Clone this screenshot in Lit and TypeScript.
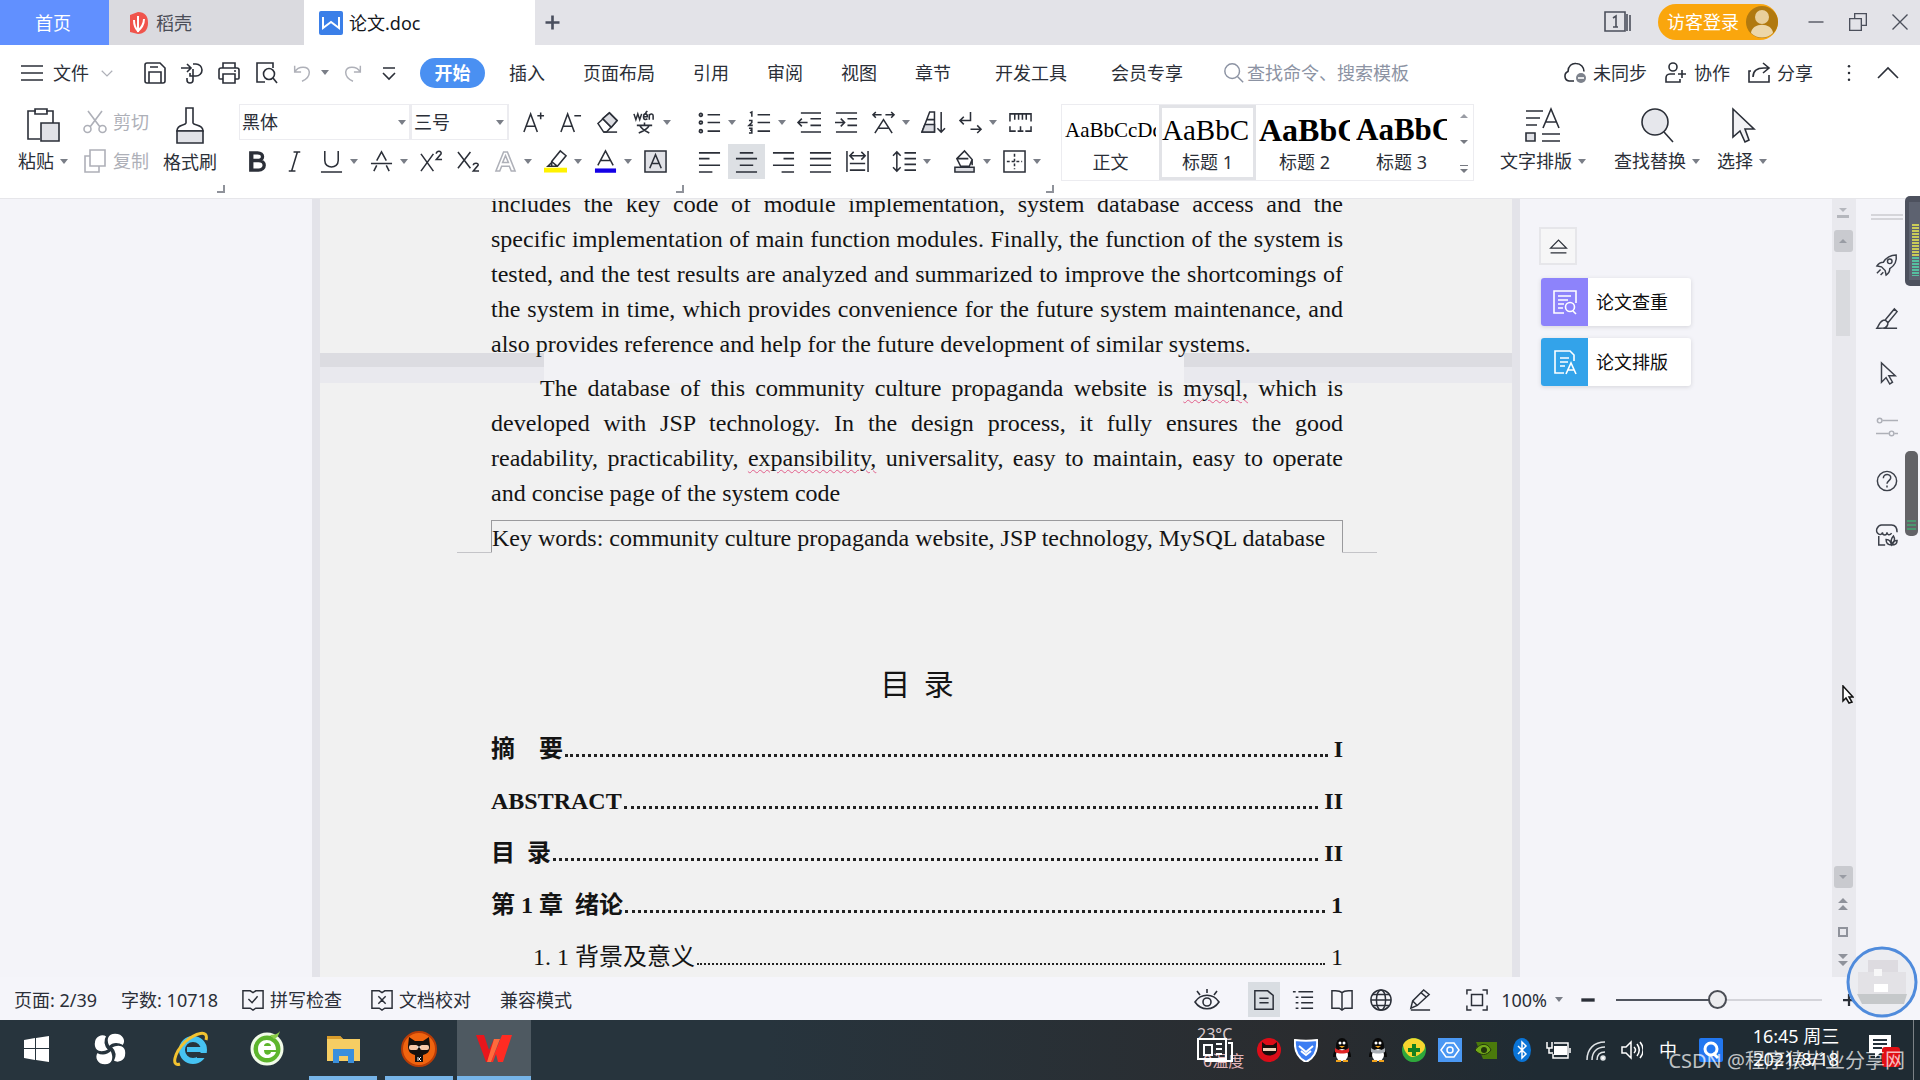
import { LitElement, html, svg, css, nothing, TemplateResult, SVGTemplateResult } from "lit";
import { customElement, state } from "lit/decorators.js";
import { classMap } from "lit/directives/class-map.js";

const GLYPHS: Record<string, SVGTemplateResult> = {
  burger: svg`<path d="M1 5h22M1 12h22M1 19h22"/>`,
  chevron: svg`<path d="M5 9l7 7 7-7"/>`,
  chevronUp: svg`<path d="M2 17L12 7l10 10"/>`,
  save: svg`<path d="M4 2h13l5 5v13a2 2 0 0 1-2 2H4a2 2 0 0 1-2-2V4a2 2 0 0 1 2-2zM6 22V11h12v11M7 6h8"/>`,
  convert: svg`<path d="M1 7h9M7 3l4 4-4 4M13 3h3a6 6 0 0 1 0 12h-6v-3M13 8v11a3 3 0 0 1-6 0v-2"/>`,
  print: svg`<path d="M6 7V2h12v5M6 18H3a1 1 0 0 1-1-1V9a2 2 0 0 1 2-2h16a2 2 0 0 1 2 2v8a1 1 0 0 1-1 1h-3M6 13h12v9H6zM17 10h2"/>`,
  preview: svg`<path d="M11 21H3V2h16v5"/><circle cx="15" cy="13" r="5.5"/><path d="M19 17l4 5"/>`,
  undo: svg`<path d="M4 4v7h7M4 11c4-7 15-7 16 0 0 5-3 8-8 10"/>`,
  redo: svg`<path d="M20 4v7h-7M20 11C16 4 5 4 4 11c0 5 3 8 8 10"/>`,
  overflow: svg`<path d="M6 7h12M6 12l6 6 6-6"/>`,
  search: svg`<circle cx="10" cy="10" r="8"/><path d="M16 16l6 6"/>`,
  cloud: svg`<path d="M11 20H6a5 5 0 0 1-1-9.500C5 5 9 2 13 2.500c5 0 8 4 8 8"/><circle cx="18" cy="17" r="5" fill="#7d828c" stroke="none"/><path d="M15 17h6" stroke="#fff"/>`,
  person: svg`<circle cx="9" cy="6" r="4"/><path d="M11 13H6c-3 0-4 2-4 4v4h14v-3M14 13h8M18 9v8"/>`,
  share: svg`<path d="M4 10H2v11h20v-7M6 16c0-6 4-9 11-9h4M16 2l6 5-6 5"/>`,
  dots: svg`<g fill="currentColor" stroke="none"><circle cx="12" cy="4" r="1.500"/><circle cx="12" cy="12" r="1.500"/><circle cx="12" cy="20" r="1.500"/></g>`,
  plus: svg`<path d="M12 4v16M4 12h16" stroke-width="3"/>`,
  minus: svg`<path d="M4 12h16" stroke-width="4"/>`,
  windows: svg`<path d="M1 2h20v19H1zM23 4v17M26 5v16"/><path d="M9 8l3-2v11M9 17h5"/>`,
  min: svg`<path d="M3 12h18"/>`,
  restore: svg`<path d="M2 8h14v14H2zM8 8V2h14v14h-6"/>`,
  close: svg`<path d="M3 3l18 18M21 3L3 21"/>`,
  cut: svg`<path d="M5 1l12 16M19 1L7 17"/><circle cx="4.500" cy="19" r="3.500"/><circle cx="19.500" cy="19" r="3.500"/>`,
  copy: svg`<path d="M7 1h15v16H7zM7 7H2v16h14v-6"/>`,
  incA: svg`<path d="M2 22L9 3l7 19M4 16h10M16 5h7M19.500 1.500v7"/>`,
  decA: svg`<path d="M2 22L9 3l7 19M4 16h10M16 5h7"/>`,
  eraser: svg`<path d="M2 13L14 2l8 8-11 12H8zM7 8l9 9" /><path d="M14 2l8 8-6 7-9-9z" fill="#dcdde2"/><path d="M8 22h14"/>`,
  pinyin: svg`<path d="M1 3l2 6 2-6 2 6 2-6M11 6h4c0-4-4-4-4 0s3 3 4 2M13 2l2-2M17 9V3M17 5c1-3 4-2 4 0v4M12 12v3M4 15h16M7 15c2 4 6 6 10 8M17 15c-2 4-6 6-11 8"/>`,
  bold: svg`<path d="M5 3h7c7 0 7 8 0 8H6h7c8 0 8 10 0 10H5zM6 3v18" stroke-width="3.500"/>`,
  italic: svg`<path d="M11 2h7M6 22h7M15 2L9 22"/>`,
  underline: svg`<path d="M5 1v10c0 9 14 9 14 0V1M1 23h22"/>`,
  strike: svg`<path d="M7 11l5-9 5 9M1 14h22M4 22l3-6M17 16l3 6"/>`,
  sup: svg`<path d="M1 4l13 18M14 4L1 22M17 4c0-4 6-3 5 0l-5 6h6"/>`,
  sub: svg`<path d="M1 2l13 17M14 2L1 19M17 16c0-3 6-3 5 0l-5 6h6"/>`,
  outlineA: svg`<path d="M2 22L10 2h4l8 20h-4l-2-5H8l-2 5zM9 13h6l-3-7z"/>`,
  marker: svg`<path d="M8 12L17 1l6 5-9 11H8zM8 12l6 5M8 13l-4 4h5"/><path d="M0 21h24" stroke="#fff200" stroke-width="5"/>`,
  colorA: svg`<path d="M4 16L12 1l8 15M7 11h10"/><path d="M1 21.500h22" stroke="#1400e6" stroke-width="4.500"/>`,
  boxA: svg`<path d="M1 1h22v22H1z" fill="#e1e2e7"/><path d="M6 19l6-14 6 14M8 14h8"/>`,
  bullets: svg`<path d="M10 4h13M10 12h13M10 21h13"/><g stroke-width="1.800"><circle cx="3" cy="4" r="1.500"/><circle cx="3" cy="12" r="1.500"/><circle cx="3" cy="21" r="1.500"/></g>`,
  numbers: svg`<path d="M10 4h13M10 12h13M10 21h13"/><path d="M2 2l2-1v5M1 10h3v2l-3 3h4M1 18h3v5H1M2 20h2" />`,
  outdent: svg`<path d="M3 2h21M13 8h11M13 15h11M3 22h21M0 12h10M4 8l-4 4 4 4"/>`,
  indent: svg`<path d="M1 2h22M13 8h10M13 15h10M1 22h22M0 12h9M6 8l4 4-4 4"/>`,
  scaleA: svg`<path d="M1 4h9M4 1L1 4l3 3M14 4h9M20 1l3 3-3 3M3 23L12 9l9 14M7 18h10"/>`,
  sort: svg`<path d="M0 22L8 1h5v21zM5 9h8" /><path d="M0 22l3-8h10v8z" fill="#d9dae0"/><path d="M20 1v21M16 18l4 4 4-4"/>`,
  wrap: svg`<path d="M12 1v9H1M5 6l-4 4 4 4M12 19h11M19 15l4 4-4 4"/>`,
  ruler: svg`<path d="M1 11V3h22v8M6 3v6M10 3v6M14 3v6M18 3v6M1 16v5h6M23 16v5h-6M12 16v5M9 21h6"/>`,
  left: svg`<path d="M1 3h22M1 9h11M1 16h22M1 23h14" />`,
  center: svg`<path d="M5 3h14M1 9h22M5 16h14M1 23h22"/>`,
  right: svg`<path d="M1 3h22M12 9h11M1 16h22M10 23h13"/>`,
  justify: svg`<path d="M1 3h22M1 9h22M1 16h22M1 23h22"/>`,
  distribute: svg`<path d="M1 1v22M23 1v22M4 14h16M4 21h16M5 6h14M8 2L4 6l4 4M16 2l4 4-4 4"/>`,
  spacing: svg`<path d="M4 2v20M0 6l4-4 4 4M0 18l4 4 4-4M12 3h12M12 9h12M12 15h12M12 21h12"/>`,
  shading: svg`<path d="M4 9L12 1l8 9-3 7H8zM4 9h12M20 10v6"/><path d="M2 18h20v5H2z" fill="#dcdde2"/>`,
  borders: svg`<path d="M1 1h22v22H1z"/><path d="M12 4v16M4 12h16" stroke-dasharray="3 2"/>`,
  rocket: svg`<path d="M22 1c-7 0-11 3-14 8-3 0-5 1-7 4l5 1 4 4 1 5c3-2 4-4 4-7 5-3 8-8 7-15z"/><circle cx="15" cy="8" r="2.500"/><path d="M5 17l-4 4M8 20l-3 3"/>`,
  brush: svg`<path d="M10 13L20 1l3 3-10 12M10 13c-6 0-6 5-9 9 6 0 12 1 12-6zM8 22h15"/>`,
  pointer: svg`<path d="M6 1v21l5-5 4 7 3-2-4-7h7z"/>`,
  sliders: svg`<circle cx="4" cy="5" r="2.500"/><path d="M7 5h17M0 19h14M20 19h4"/><circle cx="17" cy="19" r="2.500"/>`,
  help: svg`<circle cx="12" cy="12" r="10.500"/><path d="M8 9c0-6 9-5 8 0-1 3-4 3-4 6M12 17v2"/>`,
  store: svg`<path d="M3 13v10h7M3 11C1 10 0 8 1 5c1-2 2-4 5-4h11c4 0 6 3 6 8M7 9c0 4 5 4 5 0M12 9c0 3 3 4 5 1M3 11c2 1 4 0 4-2"/><path d="M17 23c-4 0-6-2-6-6 4 0 5 2 6 6zM17 23c-1-4 0-8 2-10 2 3 1 7-2 10zM17 23c1-4 3-5 6-5 0 4-2 5-6 5z"/>`,
  eject: svg`<path d="M2 14L12 4l10 10zM2 20h20"/>`,
  spell: svg`<path d="M1 2h8l3 2 3-2h8v19h-8l-3 2-3-2H1zM7 11l4 4 6-7"/>`,
  proof: svg`<path d="M1 2h8l3 2 3-2h8v19h-8l-3 2-3-2H1zM8 8l8 8M16 8l-8 8"/>`,
  eye: svg`<path d="M0 14c6-9 18-9 24 0-6 9-18 9-24 0z"/><circle cx="12" cy="14" r="4"/><path d="M12 1v4M2 3l3 4M22 3l-3 4"/>`,
  page: svg`<path d="M2 2h14l6 5v15H2zM7 10h10M7 15h10"/>`,
  outline: svg`<path d="M1 3h3M7 3h16M4 9h3M10 9h13M4 15h3M10 15h13M4 21h3M10 21h13"/>`,
  book: svg`<path d="M12 4c-3-3-7-2-11-2v19h8l3 2 3-2h8V2c-4 0-8-1-11 2v19"/>`,
  globe: svg`<circle cx="12" cy="12" r="11"/><ellipse cx="12" cy="12" rx="5" ry="11"/><path d="M1 12h22M3 6h18M3 18h18"/>`,
  pen: svg`<path d="M2 21l2-8L16 1l6 5L9 18zM13 4l6 5M4 13l5 5M2 23h21"/>`,
  fit: svg`<path d="M1 6V1h5M18 1h5v5M23 18v5h-5M6 23H1v-5M6 6h12v12H6z"/>`,
};

const icon = (name: string, size = 24) => html`
  <svg class="glyph" width=${size} height=${size} viewBox="0 0 24 24" aria-hidden="true">${GLYPHS[name]}</svg>`;

const caret = html`<svg class="caret" width="8" height="5" viewBox="0 0 8 5" aria-hidden="true"><path d="M0 0h8L4 5z"/></svg>`;

interface Tool { id: string; label: string; drop?: boolean; off?: boolean; gap?: boolean }

const FONT_TOP: Tool[] = [
  { id: "incA", label: "增大字号" }, { id: "decA", label: "减小字号" },
  { id: "eraser", label: "清除格式" }, { id: "pinyin", label: "拼音指南", drop: true },
];
const FONT_BOTTOM: Tool[] = [
  { id: "bold", label: "加粗" }, { id: "italic", label: "倾斜" }, { id: "underline", label: "下划线", drop: true },
  { id: "strike", label: "删除线", drop: true }, { id: "sup", label: "上标" }, { id: "sub", label: "下标" },
  { id: "outlineA", label: "文字效果", drop: true, off: true }, { id: "marker", label: "突出显示", drop: true },
  { id: "colorA", label: "字体颜色", drop: true }, { id: "boxA", label: "字符底纹" },
];
const PARA_TOP: Tool[] = [
  { id: "bullets", label: "项目符号", drop: true }, { id: "numbers", label: "编号", drop: true },
  { id: "outdent", label: "减少缩进量" }, { id: "indent", label: "增加缩进量" },
  { id: "scaleA", label: "中文版式", drop: true }, { id: "sort", label: "排序" },
  { id: "wrap", label: "显示编辑标记", drop: true }, { id: "ruler", label: "制表位" },
];
const PARA_BOTTOM: Tool[] = [
  { id: "left", label: "左对齐" }, { id: "center", label: "居中对齐" }, { id: "right", label: "右对齐" },
  { id: "justify", label: "两端对齐" }, { id: "distribute", label: "分散对齐" },
  { id: "spacing", label: "行距", drop: true, gap: true }, { id: "shading", label: "底纹颜色", drop: true, gap: true },
  { id: "borders", label: "边框", drop: true },
];

const MENUS = ["开始", "插入", "页面布局", "引用", "审阅", "视图", "章节", "开发工具", "会员专享"];

const STYLES = [
  { sample: "AaBbCcDd", name: "正文", kind: "body" },
  { sample: "AaBbC", name: "标题 1", kind: "h1" },
  { sample: "AaBbC", name: "标题 2", kind: "h2" },
  { sample: "AaBbC", name: "标题 3", kind: "h3" },
];

const PARA_ONE = [
  "includes the key code of module implementation, system database access and the",
  "specific implementation of main function modules. Finally, the function of the system is",
  "tested, and the test results are analyzed and summarized to improve the shortcomings of",
  "the system in time, which provides convenience for the future system maintenance, and",
  "also provides reference and help for the future development of similar systems.",
];
const PARA_TWO: (string | TemplateResult)[] = [
  html`The database of this community culture propaganda website is <span class="typo">mysql,</span> which is`,
  "developed with JSP technology. In the design process, it fully ensures the good",
  html`readability, practicability, <span class="typo">expansibility,</span> universality, easy to maintain, easy to operate`,
  "and concise page of the system code",
];

const TOC = [
  { title: "摘\u3000要", page: "I", level: 1 },
  { title: "ABSTRACT", page: "II", level: 1 },
  { title: "目  录", page: "II", level: 1 },
  { title: "第 1 章  绪论", page: "1", level: 1 },
  { title: "1. 1 背景及意义", page: "1", level: 2 },
];

@customElement("app-root")
export class AppRoot extends LitElement {
  @state() private menu = "开始";
  @state() private align = "center";

  static styles = css`
    :host { display: flex; flex-direction: column; height: 100vh; overflow: hidden; position: relative;
      font: 18px/24px "Noto Sans", "Noto Sans CJK SC", sans-serif; color: #2b2f38; background: #f4f4f9; }
    * { box-sizing: border-box; }
    button, select, input { font: inherit; color: inherit; background: none; border: 0; padding: 0; margin: 0; outline: none; }
    button { white-space: nowrap; }
    a { color: inherit; text-decoration: none; }
    .glyph { flex: none; display: block; fill: none; stroke: currentColor; stroke-width: 1.6; overflow: visible; }
    .caret { flex: none; fill: #7a7e87; }
    .art { flex: none; display: block; }
    .row { display: flex; align-items: center; }
    .push { margin-left: auto; }
    .muted { color: #aeb0b8; }

    .titlebar { display: flex; height: 45px; background: #e3e3e8; flex: none; }
    .tab { display: flex; align-items: center; height: 45px; }
    .tab-home { width: 109px; background: #6190ff; color: #fff; justify-content: center; padding-right: 3px; }
    .tab-docer { width: 195px; background: #dadadf; padding-left: 20px; gap: 7px; color: #4a4d57; }
    .tab-doc { width: 231px; background: #fff; padding-left: 15px; gap: 6px; color: #15171c; }
    .tab-new { width: 34px; justify-content: center; color: #4a4f5e; }
    .window { padding-right: 10px; gap: 22px; color: #4b4f5b; padding-bottom: 2px; }
    .login { display: flex; align-items: center; width: 120px; height: 36px; border-radius: 18px; background: #faa60d;
      color: #fff; padding-left: 9px; gap: 7px; margin: 0 6px 0 8px; }

    .menubar { display: flex; align-items: center; height: 55px; background: #fff; padding: 0 20px; flex: none; }
    .file { display: flex; align-items: center; gap: 9px; margin-right: 27px; }
    .quick { display: flex; align-items: center; gap: 13px; }
    .quick .tight { display: flex; align-items: center; gap: 8px; }
    .menus { display: flex; align-items: center; gap: 38px; margin-left: 19px; }
    .menus button.on { background: #4a90f2; color: #fff; font-weight: 700; border-radius: 15px; height: 30px; width: 65px; margin-right: -14px; }
    .menus .wide { margin-left: 6px; }
    .find { display: flex; align-items: center; gap: 2px; margin-left: 40px; color: #8c93a3; }
    .find input { width: 180px; }
    .find input::placeholder { color: #8c93a3; opacity: 1; }
    .account { gap: 17px; }
    .account button { display: flex; align-items: center; gap: 6px; }
    .account .more { margin-left: 9px; }

    .ribbon { display: flex; height: 99px; background: #fff; padding: 4px 18px 0; flex: none; border-bottom: 1px solid #e6e6ea; }
    .big { display: flex; flex-direction: column; align-items: center; gap: 6px; padding-top: 3px; height: 78px; }
    .big .row { gap: 6px; }
    .clip { display: flex; flex-direction: column; gap: 15px; margin: 6px 14px 0 15px; }
    .clip button { display: flex; align-items: center; gap: 6px; }
    .corner { width: 8px; height: 8px; border: solid #8f929a; border-width: 0 2px 2px 0; align-self: flex-end; margin-bottom: 5px; flex: none; }
    .group { display: flex; flex-direction: column; gap: 3px; }
    .group.font { margin-left: 14px; }
    .group.para { margin-left: 7px; }
    .tools { display: flex; align-items: center; height: 36px; }
    .tool { display: flex; align-items: center; height: 36px; }
    .tool.gap { margin-left: 10px; }
    .pad { width: 37px; height: 35px; display: flex; align-items: center; justify-content: center; }
    .tool.on .pad { background: #dde0e4; }
    .tool .caret { margin-right: 5px; }
    .combo { position: relative; display: flex; align-items: center; height: 36px; border: 1px solid #ececf0; border-right-width: 2px; }
    .combo select { appearance: none; width: 100%; height: 34px; padding-left: 2px; }
    .combo .caret { position: absolute; right: 3px; }
    .combo.face { width: 172px; }
    .combo.size { width: 98px; margin-right: 6px; }

    .styles { display: flex; height: 77px; border: 1px solid #ececf0; margin-left: 7px; }
    .style { display: flex; flex-direction: column; width: 97px; height: 75px; padding: 5px 3px 0; overflow: hidden; align-items: stretch; }
    .style.h1 { box-shadow: inset 0 0 0 3px #e2e3e7; }
    .sample { font-family: "Liberation Serif", serif; color: #000; line-height: 40px; height: 40px; overflow: hidden; text-align: left; }
    .body .sample { font-size: 21px; }
    .h1 .sample { font-size: 29px; }
    .h2 .sample { font-size: 32px; font-weight: 700; }
    .h3 .sample { font-size: 31px; font-weight: 700; }
    .scroll { display: flex; flex-direction: column; justify-content: space-between; padding: 9px 5px 7px 10px; }
    .scroll svg { display: block; }
    .edit { display: flex; margin-left: 26px; gap: 28px; }
    .edit .near { margin-left: -11px; }

    .workspace { display: flex; flex: 1; min-height: 0; }
    .canvas { flex: 1; position: relative; display: flex; justify-content: center; overflow: hidden; }
    .sheet { width: 1208px; flex: none; background: #f1f1f1; border: solid #e3e3e9; border-width: 0 8px; isolation: isolate;
      padding: 0 169px 0 171px; color: #141414; font: 24px/35px "Liberation Serif", "Noto Sans CJK SC", serif; height: 100%; }
    .sheet p { margin: 0; }
    .sheet .first { margin-top: -12px; }
    .line { display: block; text-align: justify; text-align-last: justify; white-space: nowrap; }
    .line.end { text-align-last: left; }
    .indent { padding-left: 49px; }
    .typo { text-decoration: underline wavy #e2608c 1px; text-underline-offset: 3px; }
    .break { position: relative; height: 9px; }
    .band { position: absolute; top: -9px; height: 30px; width: 224px; left: -171px; background: linear-gradient(#dcdce1 0 14px, #e9e9ee 14px); z-index: -1; }
    .band.far { left: auto; right: -169px; width: 328px; }
    .band.mid { left: 53px; right: 159px; width: auto; background: #f2f2f5; }
    .sheet .keys { border: 1px solid #9a9a9d; border-bottom: 0; margin-top: 9px; height: 33px; position: relative; white-space: nowrap; }
    .keys::before, .keys::after { content: ""; position: absolute; bottom: 0; width: 35px; border-bottom: 1px solid #c4c4c8; }
    .keys::before { right: 100%; }
    .keys::after { left: 100%; }
    .sheet h1 { font: 30px/40px "Noto Sans CJK SC", sans-serif; margin: 109px 0 30px; text-align: center; white-space: pre; }
    .toc { display: flex; flex-direction: column; gap: 18px; }
    .entry { display: flex; align-items: baseline; gap: 2px; font-weight: 700; white-space: pre; height: 34px; }
    .entry.l2 { font-weight: 400; padding-left: 42px; }
    .leader { flex: 1; border-bottom: 3px dotted #222; margin-right: 4px; }
    .l2 .leader { border-bottom-width: 2px; }

    .float { position: absolute; right: 141px; top: 28px; width: 152px; display: flex; flex-direction: column; gap: 12px; }
    .fold { width: 38px; height: 38px; margin-bottom: 1px; background: #f6f6f7; border: 2px solid #e6e6ea; display: flex; align-items: center; justify-content: center; }
    .card { display: flex; align-items: center; gap: 8px; height: 48px; width: 150px; background: #fff; border-radius: 3px; color: #0c0c0c;
      box-shadow: 0 1px 4px #d4d4da; margin-left: 2px; }
    .chip { width: 47px; height: 48px; display: flex; align-items: center; justify-content: center; background: #8d83fb; color: #fff; border-radius: 3px 0 0 3px; }
    .chip.blue { background: #33a3ea; }

    .vscroll { width: 24px; background: #e9e9ee; display: flex; flex-direction: column; align-items: center; padding: 8px 2px 11px 0; color: #8f929b; }
    .vscroll .knob { width: 19px; height: 22px; background: #c9cacf; border-radius: 3px; display: flex; align-items: center; justify-content: center; }
    .knob.upper { margin-top: 11px; }
    .knob.lower { margin-top: auto; }
    .vscroll .thumb { width: 14px; height: 66px; background: #d9dade; margin-top: 18px; }
    .vscroll .nav { display: flex; flex-direction: column; align-items: center; gap: 17px; margin-top: 10px; }
    .rail { width: 64px; display: flex; flex-direction: column; align-items: center; gap: 32px; padding-top: 15px; color: #3b3f49; padding-right: 2px; }
    .rail .grip { width: 32px; height: 6px; border: solid #d5d5da; border-width: 2px 0; margin-bottom: 2px; }
    .rail button { height: 22px; }

    .status { display: flex; align-items: center; height: 43px; flex: none; padding: 2px 62px 0 14px; background: #f5f5fa; }
    .counts { display: flex; align-items: center; gap: 24px; }
    .counts button { display: flex; align-items: center; gap: 6px; }
    .counts .later { margin-left: 5px; }
    .views { display: flex; align-items: center; gap: 7px; }
    .views .view { width: 32px; height: 35px; display: flex; align-items: center; justify-content: center; }
    .views .view.on { background: #d9dde2; }
    .views .first-view { margin-right: 18px; }
    .zoom { display: flex; align-items: center; margin-left: 30px; }
    .zoom .value { display: flex; align-items: center; gap: 8px; margin: 0 15px 0 13px; }
    .zoom input { appearance: none; width: 206px; height: 20px; margin: 0 18px; background: linear-gradient(#50545e, #50545e) 0 50% / 50% 2px no-repeat, linear-gradient(#d4d4da, #d4d4da) 0 50% / 100% 2px no-repeat; }
    .zoom input::-webkit-slider-thumb { appearance: none; width: 19px; height: 19px; border-radius: 50%; border: 2px solid #4a4d55; background: #ececef; }

    .taskbar { display: flex; height: 60px; flex: none; background: linear-gradient(90deg, #27343d, #27343d 40%, #2a2c2f 68%, #1f2b33 80%); color: #fff; }
    .apps { display: flex; }
    .app { width: 76px; height: 60px; display: flex; align-items: center; justify-content: center; border-bottom: 4px solid transparent; padding-top: 2px; }
    .app.start { width: 72px; }
    .app.ie { margin-left: 5px; }
    .app.run { border-image: linear-gradient(90deg, transparent 8px, #76b4e8 8px, #76b4e8 68px, transparent 68px) 4; }
    .app.on { width: 74px; background: #4e5961; border-bottom-color: #76b4e8; }
    .tray { display: flex; align-items: center; gap: 12px; padding-right: 6px; }
    .weather { position: relative; width: 70px; height: 60px; font-size: 16px; line-height: 16px; color: #d9c9cc; margin-right: -2px; }
    .weather .deg { position: absolute; left: 20px; top: 6px; }
    .weather .lbl { position: absolute; left: 26px; top: 33px; color: #e3b6b9; }
    .weather svg { position: absolute; left: 20px; top: 17px; }
    .ime { margin: 0 10px 0 4px; }
    .time { display: flex; flex-direction: column; width: 90px; text-align: center; line-height: 23px; margin-left: 16px; padding-bottom: 4px; }
    .note { margin: 0 1px 0 13px; }
    .edge { width: 1px; height: 60px; background: #7b8186; }
    .mark { position: absolute; right: 15px; bottom: 5px; font-size: 20px; line-height: 28px; color: #ffffffb8; white-space: nowrap; }
    .bubble { position: absolute; right: 2px; bottom: 62px; }
    .meter { position: absolute; right: 0; top: 196px; }
    .meter.low { right: 2px; top: 451px; }
    .mouse { position: absolute; right: 66px; top: 685px; }
  `;

  private tool = (t: Tool) => html`
    <button class=${classMap({ tool: true, on: t.id === this.align, muted: !!t.off, gap: !!t.gap })}
      aria-label=${t.label} @click=${() => this.pick(t.id)}>
      <span class="pad">${icon(t.id, 23)}</span>${t.drop ? caret : nothing}
    </button>`;

  private pick(id: string) {
    if (["left", "center", "right", "justify", "distribute"].includes(id)) this.align = id;
  }

  private titlebar() {
    return html`<header class="titlebar">
      <button class="tab tab-home">首页</button>
      <button class="tab tab-docer">
        <svg class="art" width="20" height="24" viewBox="0 0 20 24"><path d="M1 4l8-3c7 0 10 4 10 11s-4 11-10 11l-8-2z" fill="#f0544c"/><path d="M9 5v16M5 9c0 5 1 8 4 11 3-3 6-6 6-12" fill="none" stroke="#fff" stroke-width="2"/></svg>
        稻壳</button>
      <button class="tab tab-doc">
        <svg class="art" width="24" height="24" viewBox="0 0 24 24"><rect width="24" height="24" rx="2" fill="#3b7fe8"/><path d="M4 6v11l8-6 8 6V6" fill="none" stroke="#fff" stroke-width="2"/></svg>
        论文.doc</button>
      <button class="tab tab-new" aria-label="新建">${icon("plus", 21)}</button>
      <div class="row window push">
        <button aria-label="窗口">${icon("windows", 24)}</button>
        <button class="login">访客登录
          <svg class="art" width="32" height="32" viewBox="0 0 32 32"><circle cx="16" cy="16" r="16" fill="#b1790f"/><circle cx="16" cy="11" r="7" fill="#e9cf9b"/><path d="M5 27c1-11 21-11 22 0-6 6-16 6-22 0z" fill="#ecd6a9"/></svg>
        </button>
        <button aria-label="最小化">${icon("min", 20)}</button>
        <button aria-label="还原">${icon("restore", 20)}</button>
        <button aria-label="关闭">${icon("close", 20)}</button>
      </div>
    </header>`;
  }

  private menubar() {
    return html`<nav class="menubar">
      <button class="file">${icon("burger", 24)}文件<span class="row muted">${icon("chevron", 18)}</span></button>
      <div class="quick">
        <button aria-label="保存">${icon("save")}</button>
        <button aria-label="转换">${icon("convert")}</button>
        <button aria-label="打印">${icon("print")}</button>
        <button aria-label="打印预览">${icon("preview")}</button>
        <button class="tight muted" aria-label="撤销">${icon("undo", 22)}${caret}</button>
        <button class="muted" aria-label="恢复">${icon("redo", 22)}</button>
        <button aria-label="更多">${icon("overflow", 24)}</button>
      </div>
      <div class="menus">${MENUS.map((m, i) => html`
        <button class=${classMap({ on: m === this.menu, wide: i > 6 })} @click=${() => (this.menu = m)}>${m}</button>`)}
      </div>
      <label class="find">${icon("search", 22)}<input type="text" aria-label="查找" placeholder="查找命令、搜索模板"></label>
      <div class="row account push">
        <button>${icon("cloud")}未同步</button>
        <button>${icon("person")}协作</button>
        <button>${icon("share")}分享</button>
        <button class="more" aria-label="更多">${icon("dots", 20)}</button>
        <button aria-label="收起功能区">${icon("chevronUp", 24)}</button>
      </div>
    </nav>`;
  }

  private ribbon() {
    return html`<section class="ribbon">
      <button class="big">
        <svg class="glyph" width="34" height="36" viewBox="0 0 34 36"><path d="M14 32H2V4h8M20 4h7v12"/><path d="M9 2h12v5H9z"/><path d="M15 16h18v18H15z" fill="#e1e2e7"/></svg>
        <span class="row">粘贴${caret}</span></button>
      <div class="clip">
        <button class="muted">${icon("cut")}剪切</button>
        <button class="muted">${icon("copy")}复制</button>
      </div>
      <button class="big">
        <svg class="glyph" width="30" height="37" viewBox="0 0 30 37"><path d="M11 1h7v15c1 3 10 1 10 8H2c0-7 8-5 9-8z"/><path d="M2 24h26v12H2z" fill="#e1e2e7"/></svg>
        格式刷</button>
      <span class="corner"></span>
      <div class="group font">
        <div class="tools">
          <div class="combo face"><select aria-label="字体"><option>黑体</option></select>${caret}</div>
          <div class="combo size"><select aria-label="字号"><option>三号</option></select>${caret}</div>
          ${FONT_TOP.map(this.tool)}
        </div>
        <div class="tools">${FONT_BOTTOM.map(this.tool)}</div>
      </div>
      <span class="corner"></span>
      <div class="group para">
        <div class="tools">${PARA_TOP.map(this.tool)}</div>
        <div class="tools">${PARA_BOTTOM.map(this.tool)}</div>
      </div>
      <span class="corner"></span>
      <div class="styles">
        ${STYLES.map((s) => html`<button class="style ${s.kind}"><span class="sample">${s.sample}</span><span>${s.name}</span></button>`)}
        <div class="scroll">
          <svg width="8" height="4" viewBox="0 0 8 4"><path d="M0 4l4-4 4 4z" fill="#999ca4"/></svg>
          <svg width="8" height="4" viewBox="0 0 8 4"><path d="M0 0l4 4 4-4z" fill="#777a82"/></svg>
          <svg width="8" height="8" viewBox="0 0 8 8"><path d="M0 0h8v1H0zM0 4l4 4 4-4z" fill="#777a82"/></svg>
        </div>
      </div>
      <div class="edit">
        <button class="big">
          <svg class="glyph" width="36" height="36" viewBox="0 0 36 36"><path d="M1 4h17M1 11h14M1 18h11M18 21l8-19 8 19M20 15h12M17 27h18M17 34h18"/><path d="M1 26h9v8H1z" fill="#e1e2e7"/></svg>
          <span class="row">文字排版${caret}</span></button>
        <button class="big">
          <svg class="glyph" width="36" height="36" viewBox="0 0 36 36"><circle cx="16" cy="15" r="13" fill="#e6e7ec"/><path d="M25 25l9 10"/></svg>
          <span class="row">查找替换${caret}</span></button>
        <button class="big near">
          <svg class="glyph" width="36" height="36" viewBox="0 0 36 36"><path d="M9 2v28l7-6 5 11 4-2-4-11h9z" fill="#f2f2f5"/></svg>
          <span class="row">选择${caret}</span></button>
      </div>
    </section>`;
  }

  private sheet() {
    const lines = (list: (string | TemplateResult)[], indent = false) => list.map((l, i) => html`
      <span class=${classMap({ line: true, end: i === list.length - 1, indent: indent && i === 0 })}>${l}</span>`);
    return html`<article class="sheet">
      <p class="first">${lines(PARA_ONE)}</p>
      <div class="break"><span class="band"></span><span class="band mid"></span><span class="band far"></span></div>
      <p>${lines(PARA_TWO, true)}</p>
      <p class="keys">Key words: community culture propaganda website, JSP technology, MySQL database</p>
      <h1>目  录</h1>
      <nav class="toc">${TOC.map((t) => html`<a class="entry l${t.level}" href="#"><span>${t.title}</span><span class="leader"></span><span>${t.page}</span></a>`)}</nav>
    </article>`;
  }

  private workspace() {
    return html`<main class="workspace">
      <div class="canvas">
        ${this.sheet()}
        <aside class="float">
          <button class="fold" aria-label="收起">${icon("eject", 19)}</button>
          <button class="card"><span class="chip">
            <svg class="glyph" width="26" height="26" viewBox="0 0 26 26"><path d="M24 14V2H2v22h10M6 7h13M6 11h10M6 15h6M6 19h5"/><circle cx="18" cy="18" r="4.500"/><path d="M21 22l3 3"/></svg>
          </span>论文查重</button>
          <button class="card"><span class="chip blue">
            <svg class="glyph" width="26" height="26" viewBox="0 0 26 26"><path d="M12 24H3V2h15l4 4v6M8 9h9M8 13h8M8 17h5M14 25l5-11 5 11M16 21h6"/></svg>
          </span>论文排版</button>
        </aside>
      </div>
      <div class="vscroll">
        <svg width="12" height="12" viewBox="0 0 12 12"><path d="M2 1h8L6 5zM0 8h12v3H0z" fill="#b5b7bd"/></svg>
        <span class="knob upper"><svg width="8" height="4" viewBox="0 0 8 4"><path d="M0 4l4-4 4 4z" fill="#999ca4"/></svg></span>
        <span class="thumb"></span>
        <span class="knob lower"><svg width="8" height="4" viewBox="0 0 8 4"><path d="M0 0l4 4 4-4z" fill="#999ca4"/></svg></span>
        <div class="nav">
          <svg width="10" height="12" viewBox="0 0 10 12"><path d="M0 5l5-5 5 5zM0 12l5-5 5 5z" fill="#8f929b"/></svg>
          <svg width="10" height="10" viewBox="0 0 10 10"><path d="M1 1h8v8H1z" fill="none" stroke="#8f929b" stroke-width="2"/></svg>
          <svg width="10" height="12" viewBox="0 0 10 12"><path d="M0 0l5 5 5-5zM0 7l5 5 5-5z" fill="#8f929b"/></svg>
        </div>
      </div>
      <aside class="rail">
        <span class="grip"></span>
        ${[["rocket", "快捷"], ["brush", "样式"], ["pointer", "选择"], ["sliders", "属性"], ["help", "帮助"], ["store", "素材"]].map(([g, l]) => html`
          <button class=${g === "sliders" ? "muted" : ""} aria-label=${l}>${icon(g, 22)}</button>`)}
      </aside>
    </main>`;
  }

  private status() {
    return html`<footer class="status">
      <div class="counts">
        <span>页面: 2/39</span><span>字数: 10718</span>
        <button>${icon("spell", 22)}拼写检查</button>
        <button class="later">${icon("proof", 22)}文档校对</button>
        <button class="later">兼容模式</button>
      </div>
      <div class="views push">
        <button class="view first-view" aria-label="护眼模式">${icon("eye", 24)}</button>
        <button class="view on" aria-label="页面视图">${icon("page", 22)}</button>
        <button class="view" aria-label="大纲">${icon("outline", 22)}</button>
        <button class="view" aria-label="阅读版式">${icon("book", 22)}</button>
        <button class="view" aria-label="Web版式">${icon("globe", 22)}</button>
        <button class="view" aria-label="写作模式">${icon("pen", 22)}</button>
      </div>
      <div class="zoom">
        <button aria-label="适应窗口">${icon("fit", 22)}</button>
        <button class="value">100%${caret}</button>
        <button aria-label="缩小">${icon("minus", 20)}</button>
        <input type="range" aria-label="缩放" min="0" max="100" value="49">
        <button aria-label="放大">${icon("plus", 18)}</button>
      </div>
    </footer>`;
  }

  private taskbar() {
    return html`<footer class="taskbar">
      <div class="apps">
        <button class="app start" aria-label="开始"><svg class="art" width="25" height="26" viewBox="0 0 25 26"><path d="M0 4l11-2v10H0zM12 2l13-2v12H12zM0 13h11v11L0 22zM12 13h13v13l-13-2z" fill="#fff"/></svg></button>
        <button class="app" aria-label="搜狗"><svg class="art" width="34" height="34" viewBox="0 0 34 34"><g fill="#fff" stroke="#27343d" stroke-width="1.500"><path d="M16 15C12 8 14 1 22 1c9 0 12 8 8 13-5-3-10-3-14 1z"/><path d="M18 15c8-4 15-2 15 6 0 9-8 11-13 8 3-5 2-10-2-14z"/><path d="M18 18c4 8 2 15-6 15-9 0-11-8-8-13 5 3 10 2 14-2z"/><path d="M16 18C8 22 1 20 1 12 1 3 9 1 14 4c-3 5-2 10 2 14z"/></g></svg></button>
        <button class="app ie" aria-label="Internet Explorer"><svg class="art" width="36" height="36" viewBox="0 0 36 36"><circle cx="20" cy="19" r="11" fill="none" stroke="#46c3f3" stroke-width="6"/><path d="M14 16h17v5H14z" fill="#46c3f3"/><path d="M24 22h12v5H24z" fill="#27343d"/><path d="M7 33C-2 36 1 22 12 11 22 2 36-2 33 9" fill="none" stroke="#f2c230" stroke-width="3"/></svg></button>
        <button class="app" aria-label="浏览器"><svg class="art" width="34" height="36" viewBox="0 0 34 36"><circle cx="17" cy="18" r="15" fill="#5db52c" stroke="#f2fbe9" stroke-width="3"/><path d="M26 21c-3 9-18 8-18-3 0-12 18-12 18 1H14c0 6 6 6 7 2zM14 15h7c0-4-7-4-7 0z" fill="#fff"/><path d="M20 4c4 0 8-1 10-4-1 4-3 7-6 8z" fill="#8ed04b"/></svg></button>
        <button class="app run" aria-label="文件资源管理器"><svg class="art" width="33" height="30" viewBox="0 0 33 30"><path d="M0 2h13l3 3h17v22H0z" fill="#f6cd63"/><path d="M0 2h13l3 3H0z" fill="#d99c2b"/><path d="M6 29V15h21v14h-6v-7h-9v7z" fill="#3a8fdc"/></svg></button>
        <button class="app run" aria-label="录屏"><svg class="art" width="36" height="36" viewBox="0 0 36 36"><circle cx="18" cy="18" r="17" fill="#f0640f" stroke="#b93c06" stroke-width="2"/><path d="M8 6l6 4h8l6-4 1 9c0 6-3 8-7 9v7h-8v-7c-4-1-7-3-7-9z" fill="#16100e"/><rect x="8" y="14" width="9" height="5" rx="2" fill="#f8c8a8"/><rect x="19" y="14" width="9" height="5" rx="2" fill="#f8c8a8"/><path d="M16 16h4M17 26v4M20 26l-2 2 2 2" stroke="#fff" fill="none"/></svg></button>
        <button class="app on" aria-label="WPS"><svg class="art" width="36" height="28" viewBox="0 0 36 28"><path d="M0 0h8l5 15 5-11h5l-8 23h-5z" fill="#e8161c"/><path d="M15 27L26 0h10l-9 27h-5l-2-8-3 8z" fill="#ff2b22"/><path d="M18 4h6l-9 23h-4z" fill="#ff6a3c"/></svg></button>
      </div>
      <div class="tray push">
        <div class="weather"><span class="deg">23°C</span><span class="lbl">0温度</span>
          <svg width="36" height="25" viewBox="0 0 36 25" fill="none" stroke="#fff" stroke-width="2"><path d="M1 2h28v20H1zM7 8h8v10H7zM19 7h6M19 12h6M19 17h6M31 6h4v18H8"/></svg></div>
        <svg class="art" width="25" height="25" viewBox="0 0 25 25"><circle cx="12" cy="12" r="12" fill="#dc0c18"/><path d="M5 4l4 3h7l4-3v9c-2 6-13 6-15 0z" fill="#170d0d"/><path d="M6 10h13v3H6z" fill="#f1d0b8"/></svg>
        <svg class="art" width="24" height="24" viewBox="0 0 24 24"><path d="M1 2c8 1 14 1 22 0 1 11-3 18-11 22C4 20 0 13 1 2z" fill="#3c7df2" stroke="#fff" stroke-width="2"/><path d="M5 8l7 6 7-6M7 13l5 4 5-4" fill="none" stroke="#fff" stroke-width="2"/></svg>
        ${["#df2424", "#a8adb3"].map((scarf) => html`<svg class="art" width="24" height="24" viewBox="0 0 24 24"><ellipse cx="12" cy="8" rx="6" ry="8" fill="#090909"/><path d="M3 19c0-7 4-9 9-9s9 2 9 9z" fill="#090909"/><ellipse cx="12" cy="17" rx="6" ry="6" fill="#fff"/><path d="M5 10c4 3 10 3 14 0v4c-4 2-10 2-14 0z" fill=${scarf}/><circle cx="10" cy="5" r="1.500" fill="#fff"/><circle cx="14" cy="5" r="1.500" fill="#fff"/><path d="M9 8h6l-3 2zM6 22h5v2H6zM13 22h5v2h-5z" fill="#f0a21b"/></svg>`)}
        <svg class="art" width="24" height="24" viewBox="0 0 24 24"><circle cx="12" cy="12" r="12" fill="#2fa83c"/><path d="M1 7C5-2 18-2 23 7c0 6-3 10-7 12C9 21 3 17 1 7z" fill="#f8d62e"/><path d="M1 15c5 6 14 6 22-4-1 8-6 13-12 13-5 0-9-4-10-9z" fill="#2fa83c"/><path d="M12 6v12M6 12h12" stroke="#14801f" stroke-width="4"/></svg>
        <svg class="art" width="24" height="24" viewBox="0 0 24 24"><rect width="24" height="24" fill="#4b98f3"/><path d="M8 5h8l5 7-5 7H8l-5-7z" fill="none" stroke="#fff" stroke-width="1.500"/><circle cx="12" cy="12" r="3" fill="none" stroke="#fff" stroke-width="1.500"/></svg>
        <svg class="art" width="24" height="20" viewBox="0 0 24 20"><path d="M2 2h21v17H9z" fill="#4b7a0b"/><path d="M1 10c6-8 13-7 16 0-4 6-11 6-16 0z" fill="#72a81a" stroke="#23360c"/><circle cx="10" cy="10" r="3" fill="#23360c"/></svg>
        <svg class="art" width="24" height="24" viewBox="0 0 24 24"><ellipse cx="12" cy="12" rx="9" ry="12" fill="#0a74d6"/><path d="M8 8l8 8-4 4V4l4 4-8 8" fill="none" stroke="#fff" stroke-width="1.500"/></svg>
        <svg class="art" width="25" height="18" viewBox="0 0 25 18"><path d="M8 5h13v9H8z" fill="#fff"/><path d="M8 2h14v15H7v-4M24 7v5M1 1v6h5V1M3 7v5h4" fill="none" stroke="#fff" stroke-width="1.500"/></svg>
        <svg class="art" width="24" height="24" viewBox="0 0 24 24" fill="none" stroke="#dfe3e6" stroke-width="1.500"><path d="M4 22C4 11 11 4 22 4M9 22c0-8 5-13 13-13M14 22c0-5 3-8 8-8"/><circle cx="20" cy="20" r="2" fill="#fff"/></svg>
        <svg class="art" width="24" height="22" viewBox="0 0 24 22" fill="none" stroke="#fff" stroke-width="1.500"><path d="M3 8h4l5-5v16l-5-5H3zM15 8c2 2 2 4 0 6M18 5c3 4 3 8 0 12M21 3c4 5 4 11 0 16"/></svg>
        <span class="ime">中</span>
        <svg class="art" width="24" height="24" viewBox="0 0 24 24"><rect width="24" height="24" rx="2" fill="#2277f0"/><circle cx="12" cy="11" r="6" fill="none" stroke="#fff" stroke-width="3"/><path d="M14 15l5 5" stroke="#fff" stroke-width="3"/></svg>
        <div class="time"><span>16:45 周三</span><span>2021/8/18</span></div>
        <svg class="art note" width="34" height="36" viewBox="0 0 34 36"><path d="M3 3h22v18H14l-5 5v-5H3z" fill="#fff"/><path d="M7 8h14M7 12h14M7 16h9" stroke="#25303a" stroke-width="2"/><rect x="16" y="15" width="18" height="20" rx="3" fill="#e10f14"/></svg>
        <span class="edge"></span>
      </div>
    </footer>`;
  }

  render() {
    return html`
      ${this.titlebar()}${this.menubar()}${this.ribbon()}${this.workspace()}${this.status()}${this.taskbar()}
      <svg class="meter" width="15" height="90" viewBox="0 0 15 90"><rect width="20" height="90" rx="5" fill="#4d515e"/><rect x="4" y="6" width="11" height="78" fill="#5d6270"/><path d="M10.500 28v34" stroke="#c9cb58" stroke-width="7" stroke-dasharray="2 1"/><path d="M10.500 61v19" stroke="#55bfa0" stroke-width="7" stroke-dasharray="2 1"/></svg>
      <svg class="meter low" width="13" height="85" viewBox="0 0 13 85"><rect width="13" height="85" rx="5" fill="#636367"/><path d="M2 70h9M2 74h9M2 78h9" stroke="#45a873" stroke-width="1.500"/></svg>
      <svg class="mouse" width="12" height="19" viewBox="0 0 12 19"><path d="M1 1v15l3-3 3 5 3-1-3-5h4z" fill="#fff" stroke="#111" stroke-width="1.500"/></svg>
      <svg class="bubble" width="72" height="72" viewBox="0 0 72 72"><circle cx="36" cy="36" r="34" fill="#ecedf1" stroke="#4f8bdc" stroke-width="3"/><path d="M22 14h30v12H22z" fill="#dddbe0"/><path d="M12 26h48v22H12z" fill="#e3e2e6"/><path d="M28 38h14v8H28z" fill="#fff"/><path d="M11 48h50l-3 10H16z" fill="#c5c8ca"/><path d="M28 23h8v7h-8z" fill="#f7f7f8"/></svg>
      <div class="mark">CSDN @程序猿毕业分享网</div>`;
  }
}
